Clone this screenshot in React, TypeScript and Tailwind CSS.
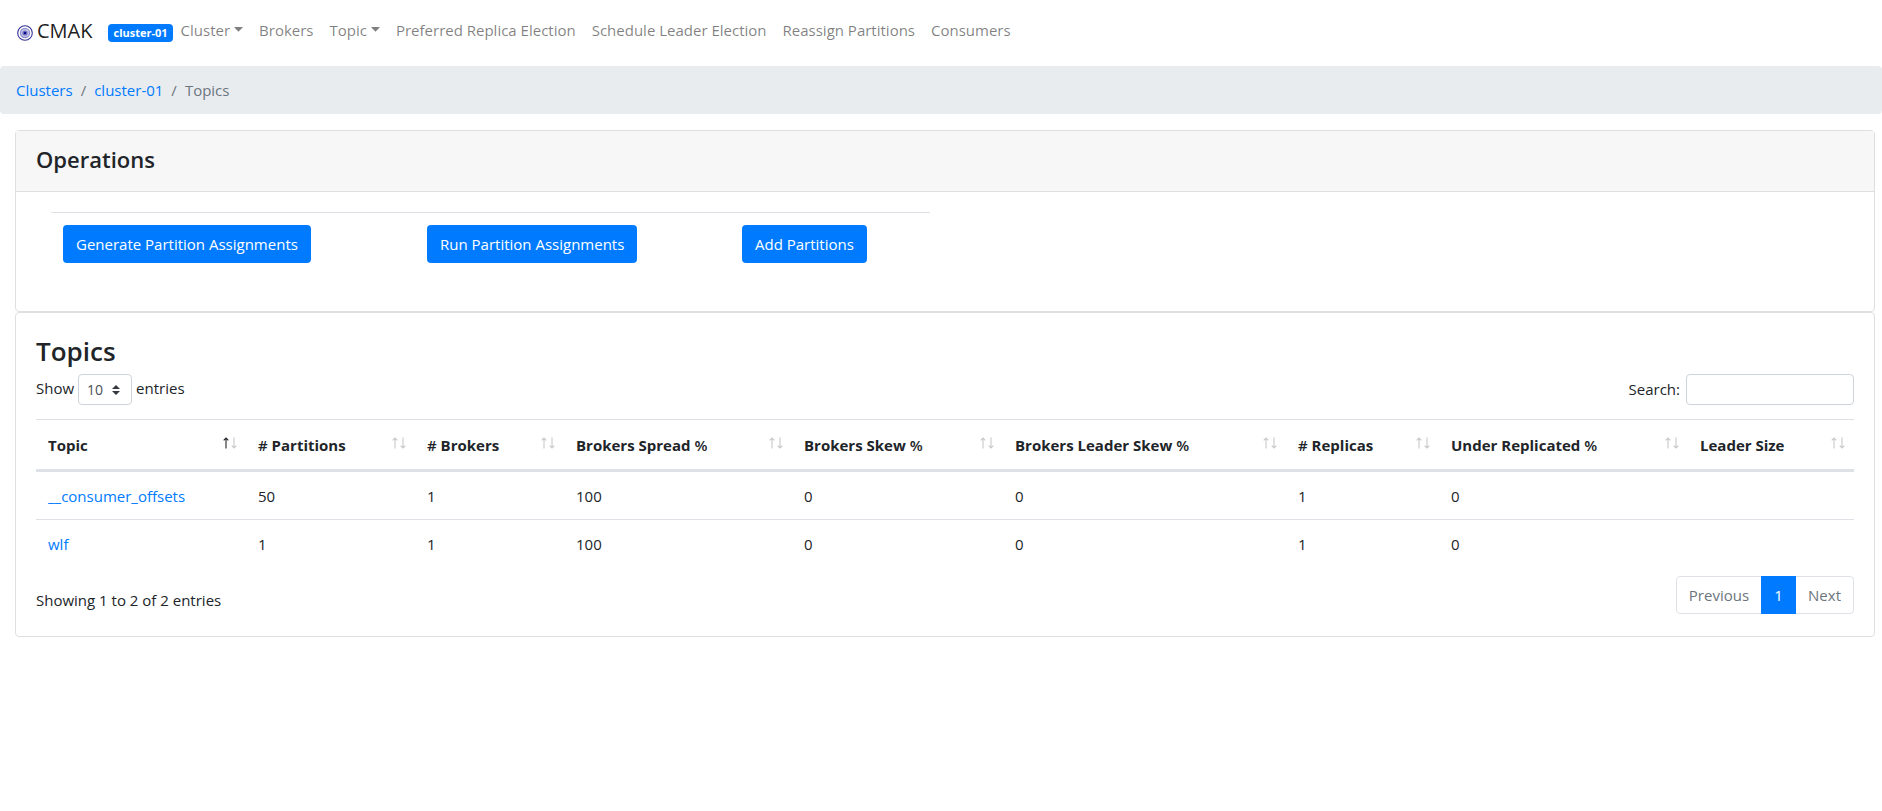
import { useState } from "react";

type Column = { label: string; prefix?: string; suffix?: string; width: number };

const columns: Column[] = [
  { label: "Topic", width: 210 },
  { label: "Partitions", prefix: "#", width: 169 },
  { label: "Brokers", prefix: "#", width: 149 },
  { label: "Brokers Spread", suffix: "%", width: 228 },
  { label: "Brokers Skew", suffix: "%", width: 211 },
  { label: "Brokers Leader Skew", suffix: "%", width: 283 },
  { label: "Replicas", prefix: "#", width: 153 },
  { label: "Under Replicated", suffix: "%", width: 249 },
  { label: "Leader Size", width: 166 },
];

const topics = [
  { name: "__consumer_offsets", values: ["50", "1", "100", "0", "0", "1", "0", ""] },
  { name: "wlf", values: ["1", "1", "100", "0", "0", "1", "0", ""] },
];

const navLinks = [
  { label: "Cluster", menu: true },
  { label: "Brokers" },
  { label: "Topic", menu: true },
  { label: "Preferred Replica Election" },
  { label: "Schedule Leader Election" },
  { label: "Reassign Partitions" },
  { label: "Consumers" },
];

const Logo = () => (
  <svg width="16" height="16" viewBox="0 0 16 16" className="mt-1 shrink-0" aria-hidden="true">
    <circle cx="8" cy="8" r="7.3" fill="#fff" stroke="#33339a" strokeWidth="1.1" />
    <circle cx="8" cy="8" r="4.6" fill="#c4c4e6" stroke="#8f8fd0" strokeWidth="1.2" />
    <circle cx="8" cy="8" r="2.6" fill="#7474c4" />
    <circle cx="8" cy="8" r="1.3" fill="#10108a" />
  </svg>
);

const Caret = () => (
  <svg width="9" height="5" viewBox="0 0 9 5" className="ml-1 mb-1 inline-block" aria-hidden="true">
    <path d="M0 0h9L4.5 4.8z" fill="currentColor" />
  </svg>
);

const SortArrows = ({ active }: { active: boolean }) => (
  <svg width="14" height="12" viewBox="0 0 14 12" fill="none" className="mb-1 shrink-0" aria-hidden="true">
    <path d="M3 11.5V1M.7 3.3 3 1l2.3 2.3" stroke={active ? "#212529" : "#c8c9ca"} strokeWidth="1.1" />
    <path d="M11 .5V11M8.7 8.7 11 11l2.3-2.3" stroke="#c8c9ca" strokeWidth="1.1" />
  </svg>
);

const Navbar = () => (
  <nav className="flex h-[66px] items-start pt-4 pr-4 pl-[17px] text-[15px] leading-7">
    <a href="#" className="mr-4 flex items-center gap-1 text-xl leading-[30px] text-black/90">
      <Logo />
      CMAK
    </a>
    <span className="mt-2 rounded bg-[#007bff] px-[5px] text-[11px] leading-[18px] font-bold text-white">
      cluster-01
    </span>
    <ul className="flex">
      {navLinks.map((link) => (
        <li key={link.label}>
          <a href="#" className="block px-2 whitespace-nowrap text-black/50">
            {link.label}
            {link.menu && <Caret />}
          </a>
        </li>
      ))}
    </ul>
  </nav>
);

const Breadcrumb = () => (
  <ol className="mb-4 flex h-12 items-center gap-2 rounded bg-[#e9ecef] px-4 text-[#6c757d]">
    <li><a href="#" className="text-[#007bff]">Clusters</a></li>
    <li aria-hidden="true">/</li>
    <li><a href="#" className="text-[#007bff]">cluster-01</a></li>
    <li aria-hidden="true">/</li>
    <li>Topics</li>
  </ol>
);

const PrimaryButton = ({ children }: { children: string }) => (
  <button className="h-[38px] rounded bg-[#007bff] px-[13px] pb-px whitespace-nowrap text-white">{children}</button>
);

const Operations = () => (
  <section className="rounded border border-[#dfdfdf]">
    <div className="border-b border-[#dfdfdf] bg-[#f7f7f7] px-5 pt-[14px] pb-[17px]">
      <h4 className="text-[22px] leading-[29px] font-semibold">Operations</h4>
    </div>
    <div className="h-[119px] px-[5px] pt-5">
      <div className="w-1/2 pr-[15px] pl-[30px]">
        <table className="w-full table-fixed border-t border-[#dee2e6]">
          <colgroup>
            <col style={{ width: 364 }} />
            <col style={{ width: 315 }} />
            <col style={{ width: 200 }} />
          </colgroup>
          <tbody>
            <tr>
              <td className="p-3"><PrimaryButton>Generate Partition Assignments</PrimaryButton></td>
              <td className="p-3"><PrimaryButton>Run Partition Assignments</PrimaryButton></td>
              <td className="p-3"><PrimaryButton>Add Partitions</PrimaryButton></td>
            </tr>
          </tbody>
        </table>
      </div>
    </div>
  </section>
);

const TopicsTable = ({ sorted, onSort }: { sorted: number; onSort: (index: number) => void }) => (
  <table className="w-full table-fixed border-collapse">
    <colgroup>
      {columns.map((col) => (
        <col key={col.label} style={{ width: col.width }} />
      ))}
    </colgroup>
    <thead>
      <tr className="border-t border-b-[3px] border-t-[#dee2e6] border-b-[#dee2e6]">
        {columns.map((col, i) => (
          <th key={col.label} className="h-[51px] p-0 text-left">
            <button
              onClick={() => onSort(i)}
              className="flex w-full items-center justify-between pr-[9px] pl-3 font-bold whitespace-nowrap"
            >
              <span>
                {col.prefix && <span className="font-semibold">{col.prefix} </span>}
                {col.label}
                {col.suffix && <span className="font-semibold"> {col.suffix}</span>}
              </span>
              <SortArrows active={i === sorted} />
            </button>
          </th>
        ))}
      </tr>
    </thead>
    <tbody>
      {topics.map((topic) => (
        <tr key={topic.name} className="border-t border-[#dee2e6]">
          <td className="h-[49px] px-3"><a href="#" className="text-[#007bff]">{topic.name}</a></td>
          {topic.values.map((value, i) => (
            <td key={i} className="h-[49px] px-3">{value}</td>
          ))}
        </tr>
      ))}
    </tbody>
  </table>
);

const Pagination = () => (
  <div className="flex h-[38px] rounded border border-[#dee2e6] text-[#6c757d]">
    <button className="px-3">Previous</button>
    <button className="-my-px w-[35px] bg-[#007bff] text-white">1</button>
    <button className="px-3">Next</button>
  </div>
);

export default function App() {
  const [sorted, setSorted] = useState(0);
  const [pageSize, setPageSize] = useState("10");
  const [search, setSearch] = useState("");

  return (
    <div className="bg-white font-['Open_Sans','Noto_Sans',sans-serif] text-[15px] leading-6 text-[#212529]">
      <Navbar />
      <Breadcrumb />
      <main className="pr-[7px] pl-[15px]">
        <Operations />
        <section className="rounded border border-[#dfdfdf] px-5 pt-[21px] pb-[22px]">
          <h3 className="text-[26px] leading-[34px] font-semibold">Topics</h3>
          <div className="mt-[6px] mb-[14px] flex items-start justify-between">
            <div className="flex items-start gap-1">
              <label htmlFor="page-size" className="leading-7">Show</label>
              <div className="relative">
                <select
                  id="page-size"
                  value={pageSize}
                  onChange={(e) => setPageSize(e.target.value)}
                  className="block h-[31px] w-[54px] appearance-none rounded border border-[#ced4da] bg-white pl-2 text-[14px] text-[#495057]"
                >
                  <option>10</option>
                  <option>25</option>
                  <option>50</option>
                  <option>100</option>
                </select>
                <svg width="8" height="10" viewBox="0 0 8 10" className="pointer-events-none absolute top-[11px] right-3" aria-hidden="true">
                  <path d="M0 4 4 0l4 4zM0 6h8l-4 4z" fill="#343a40" />
                </svg>
              </div>
              <span className="leading-7">entries</span>
            </div>
            <label className="flex items-start gap-[6px] leading-[30px]">
              Search:
              <input
                type="search"
                value={search}
                onChange={(e) => setSearch(e.target.value)}
                className="h-[31px] w-[168px] rounded border border-[#ced4da] bg-white px-2 text-[14px] outline-none"
              />
            </label>
          </div>
          <TopicsTable sorted={sorted} onSort={setSorted} />
          <div className="mt-[7px] flex items-start justify-between">
            <p className="pt-3">Showing 1 to 2 of 2 entries</p>
            <Pagination />
          </div>
        </section>
      </main>
    </div>
  );
}
